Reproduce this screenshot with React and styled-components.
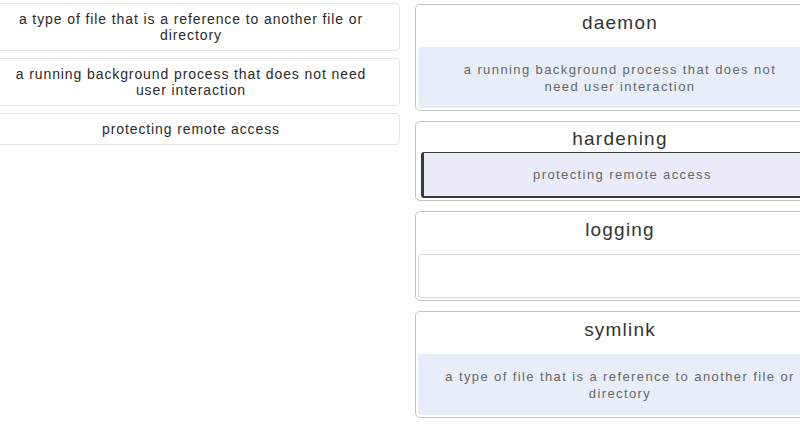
import React from "react";
import styled, { createGlobalStyle } from "styled-components";

const GlobalStyle = createGlobalStyle`
	html, body {
		margin: 0;
		padding: 0;
		background: #ffffff;
		overflow: hidden;
	}
	body {
		font-family: "Liberation Sans", Arial, sans-serif;
		color: #333;
	}
`;

const Board = styled.div`
	display: grid;
	grid-template-columns: 418px 408px;
	column-gap: 15px;
	align-items: start;
	margin-left: -18px;
	padding-top: 3px;
	width: 841px;
`;

const Options = styled.div`
	display: flex;
	flex-direction: column;
	gap: 7px;
`;

const Option = styled.div`
	border: 1px solid #e4e4e4;
	border-radius: 4px;
	background: #fff;
	padding: 7px 22px;
	font-size: 14px;
	line-height: 16px;
	letter-spacing: 0.9px;
	text-align: center;
	color: #2a2a2a;
`;

const Targets = styled.div`
	display: flex;
	flex-direction: column;
	gap: 10px;
	padding-top: 1px;
`;

const Target = styled.div`
	border: 1px solid #c4c4c4;
	border-radius: 5px;
	background: #fff;
	padding: 0 0 2px 2px;
`;

const Term = styled.div`
	height: ${(p) => (p.$compact ? "30px" : "42px")};
	padding-top: ${(p) => (p.$compact ? "5px" : "6px")};
	box-sizing: border-box;
	text-align: center;
	font-size: 19px;
	line-height: 24px;
	letter-spacing: 1.2px;
	color: #333;
`;

const Slot = styled.div`
	min-height: ${(p) => (p.$tall ? "61px" : "44px")};
	box-sizing: border-box;
	display: flex;
	align-items: center;
	justify-content: center;
	padding: 8px 16px;
	text-align: center;
	white-space: pre-line;
	font-size: 13px;
	line-height: 17px;
	letter-spacing: 1.4px;
	color: #666;
	border-radius: 3px;
	background: ${(p) => (p.$filled ? "#e8eef9" : "#fff")};
	border: 1px solid ${(p) => (p.$filled ? "#e8eef9" : "#dcdcdc")};
	${(p) =>
		p.$active &&
		`
		min-height: 46px;
		margin-left: 3px;
		background: #e9ecf8;
		border: 1px solid #3a3a3a;
		border-left-width: 3px;
		border-bottom-width: 2px;
	`}
`;

const options = [
	"a type of file that is a reference to another file or directory",
	"a running background process that does not need user interaction",
	"protecting remote access",
];

const targets = [
	{ term: "daemon", answer: "a running background process that does not\nneed user interaction", tall: true },
	{ term: "hardening", answer: "protecting remote access", compact: true, active: true },
	{ term: "logging", answer: "" },
	{ term: "symlink", answer: "a type of file that is a reference to another file or\ndirectory", tall: true },
];

const App = () => {
	return (
		<>
			<GlobalStyle />
			<Board>
				<Options>
					{options.map((text) => (
						<Option key={text}>{text}</Option>
					))}
				</Options>
				<Targets>
					{targets.map((t) => (
						<Target key={t.term}>
							<Term $compact={t.compact}>{t.term}</Term>
							<Slot $filled={!!t.answer} $active={t.active} $tall={t.tall}>
								{t.answer}
							</Slot>
						</Target>
					))}
				</Targets>
			</Board>
		</>
	);
};

export default App;
